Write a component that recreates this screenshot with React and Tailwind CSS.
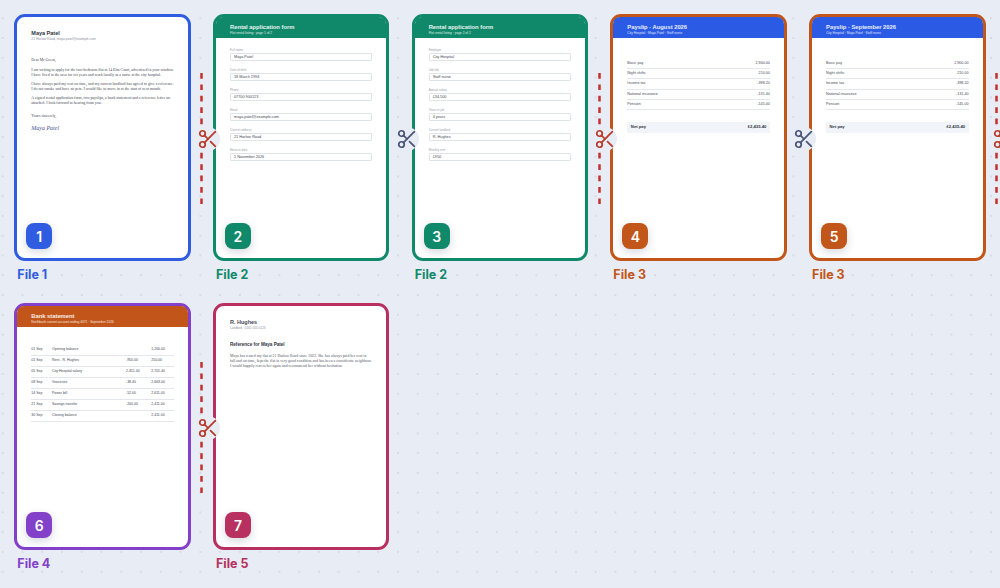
import React from 'react';
import { Scissors } from 'lucide-react';

const sans = "font-['Liberation_Sans',Arial,sans-serif]";
const serif = "font-['Liberation_Serif','Times_New_Roman',serif]";

const form1 = [
  ['Full name', 'Maya Patel'],
  ['Date of birth', '18 March 1994'],
  ['Phone', '07700 900123'],
  ['Email', 'maya.patel@example.com'],
  ['Current address', '21 Harlow Road'],
  ['Move-in date', '1 November 2026'],
];

const form2 = [
  ['Employer', 'City Hospital'],
  ['Job title', 'Staff nurse'],
  ['Annual salary', '£34,500'],
  ['Years in job', '4 years'],
  ['Current landlord', 'R. Hughes'],
  ['Monthly rent', '£950'],
];

const payRows = [
  ['Basic pay', '2,900.00'],
  ['Night shifts', '210.00'],
  ['Income tax', '-398.20'],
  ['National insurance', '-131.40'],
  ['Pension', '-145.00'],
];

const bankRows = [
  ['01 Sep', 'Opening balance', '', '1,200.00'],
  ['01 Sep', 'Rent - R. Hughes', '-950.00', '250.00'],
  ['05 Sep', 'City Hospital salary', '2,451.40', '2,701.40'],
  ['08 Sep', 'Groceries', '-38.40', '2,663.00'],
  ['14 Sep', 'Power bill', '-52.00', '2,611.00'],
  ['21 Sep', 'Savings transfer', '-200.00', '2,411.00'],
  ['30 Sep', 'Closing balance', '', '2,411.00'],
];

function Header({ title, sub, color }) {
  return (
    <div className={`${color} h-[20.5px] rounded-t-[7px] pl-[14px] pt-[5.5px] text-white/90 ${sans}`}>
      <div className="text-[5.8px] leading-[8px] font-bold">{title}</div>
      <div className="text-[3.2px] leading-[4.5px] mt-[0.5px] opacity-90">{sub}</div>
    </div>
  );
}

function Letter() {
  return (
    <div className="pl-[14px] pr-[14px] pt-[13px]">
      <div className={`${sans} text-[5.5px] leading-[7px] font-bold text-[#30353f]`}>Maya Patel</div>
      <div className={`${sans} text-[3.3px] leading-[5px] text-[#8a909d]`}>21 Harlow Road, maya.patel@example.com</div>
      <div className={`${serif} text-[3.9px] leading-[4.7px] text-[#454a55] mt-[16px] space-y-[4.9px]`}>
        <p className="mb-[5.2px]">Dear Mr Green,</p>
        <p>I am writing to apply for the two-bedroom flat at 14 Elm Court, advertised in your window. I have lived in the area for six years and work locally as a nurse at the city hospital.</p>
        <p>I have always paid my rent on time, and my current landlord has agreed to give a reference. I do not smoke and have no pets. I would like to move in at the start of next month.</p>
        <p>A signed rental application form, two payslips, a bank statement and a reference letter are attached. I look forward to hearing from you.</p>
        <p className="pt-[3px]">Yours sincerely,</p>
      </div>
      <div className={`${serif} italic text-[6px] leading-[8px] text-[#4a5590] mt-[5.5px]`}>Maya Patel</div>
    </div>
  );
}

function Form({ sub, rows }) {
  return (
    <div>
      <Header title="Rental application form" sub={sub} color="bg-[#10896a]" />
      <div className={`${sans} px-[14px] pt-[10px] space-y-[7px]`}>
        {rows.map(([label, value]) => (
          <div key={label}>
            <div className="text-[3px] leading-[4px] text-[#9aa0ac] mb-[1px]">{label}</div>
            <div className="h-[8px] w-[142px] border border-[#dfe3ea] rounded-[1px] pl-[3px] text-[3.8px] leading-[6px] text-[#454a55]">{value}</div>
          </div>
        ))}
      </div>
    </div>
  );
}

function Payslip({ month }) {
  return (
    <div>
      <Header title={`Payslip · ${month} 2026`} sub="City Hospital · Maya Patel · Staff nurse" color="bg-[#2b5be4]" />
      <div className={`${sans} px-[14px] pt-[21.5px] text-[3.7px] text-[#454a55]`}>
        {payRows.map(([label, value]) => (
          <div key={label} className="flex justify-between h-[10.2px] leading-[8.5px] border-b border-[#e3e6ec]">
            <span>{label}</span>
            <span>{value}</span>
          </div>
        ))}
        <div className="mt-[12px] h-[11px] bg-[#f1f4f8] px-[3.5px] flex justify-between items-center text-[4.2px] font-bold text-[#30353f]">
          <span>Net pay</span>
          <span>£2,435.40</span>
        </div>
      </div>
    </div>
  );
}

function Statement() {
  return (
    <div>
      <Header
        title="Bank statement"
        sub="Northbank current account ending 4471 · September 2026"
        color="bg-[#c2561a]"
      />
      <div className={`${sans} px-[14px] pt-[18px] text-[3.5px] text-[#454a55]`}>
        {bankRows.map(([date, desc, amount, balance]) => (
          <div key={date + desc} className="grid grid-cols-[20.7px_74px_25.3px_1fr] h-[11px] leading-[9px] border-b border-[#e3e6ec]">
            <span>{date}</span>
            <span>{desc}</span>
            <span>{amount}</span>
            <span>{balance}</span>
          </div>
        ))}
      </div>
    </div>
  );
}

function Reference() {
  return (
    <div className="px-[14px] pt-[12.5px]">
      <div className={`${sans} text-[5.5px] leading-[7px] font-bold text-[#454a55]`}>R. Hughes</div>
      <div className={`${sans} text-[3.1px] leading-[5px] text-[#8a909d]`}>Landlord · 0161 555 0123</div>
      <div className={`${sans} text-[4.6px] leading-[6px] font-bold text-[#30353f] mt-[11.5px]`}>Reference for Maya Patel</div>
      <p className={`${serif} text-[3.9px] leading-[5px] text-[#545965] mt-[6px]`}>
        Maya has rented my flat at 21 Harlow Road since 2022. She has always paid her rent in full and on time, kept the flat in very good condition and has been a considerate neighbour. I would happily rent to her again and recommend her without hesitation.
      </p>
    </div>
  );
}

// cut mark sits in the gap left of a card; `far` puts it in the gap on the right instead
function Cut({ kind, far }) {
  const red = kind === 'red';
  return (
    <div className={`absolute top-0 w-0 h-0 ${far ? 'left-[198.6px]' : 'left-0'}`}>
      {red && (
        <svg className="absolute left-[-12.5px] top-[59px]" width="3" height="132">
          <line x1="1.5" y1="0" x2="1.5" y2="132" stroke="#c4302f" strokeWidth="2.5" strokeDasharray="5.7 5.7" />
        </svg>
      )}
      <div className="absolute left-[-17px] top-[113px] w-[24px] h-[24px] rounded-full bg-[#e8ecf4] flex items-center justify-center">
        <Scissors size={22} strokeWidth={1.9} className={red ? 'text-[#b83a2a]' : 'text-[#4b5578]'} />
      </div>
    </div>
  );
}

const pages = [
  { n: 1, file: 'File 1', border: 'border-[#2f5ce0]', badge: 'bg-[#2f5ce0]', text: 'text-[#2f5ce0]', body: <Letter /> },
  { n: 2, file: 'File 2', border: 'border-[#10896a]', badge: 'bg-[#10896a]', text: 'text-[#10896a]', cut: 'red', body: <Form sub="Flat rental listing · page 1 of 2" rows={form1} /> },
  { n: 3, file: 'File 2', border: 'border-[#10896a]', badge: 'bg-[#10896a]', text: 'text-[#10896a]', cut: 'grey', body: <Form sub="Flat rental listing · page 2 of 2" rows={form2} /> },
  { n: 4, file: 'File 3', border: 'border-[#c2561a]', badge: 'bg-[#c2561a]', text: 'text-[#c2561a]', cut: 'red', body: <Payslip month="August" /> },
  { n: 5, file: 'File 3', border: 'border-[#c2561a]', badge: 'bg-[#c2561a]', text: 'text-[#c2561a]', cut: 'grey', farCut: 'red', body: <Payslip month="September" /> },
  { n: 6, file: 'File 4', border: 'border-[#8340c9]', badge: 'bg-[#8340c9]', text: 'text-[#8340c9]', body: <Statement /> },
  { n: 7, file: 'File 5', border: 'border-[#b8305f]', badge: 'bg-[#b8305f]', text: 'text-[#b8305f]', cut: 'red', body: <Reference /> },
];

export default function App() {
  return (
    <div className="h-[588px] w-full overflow-hidden bg-[#e8ecf4] bg-[radial-gradient(circle,#d0d5e0_0.6px,transparent_1px)] bg-[length:19.77px_19.77px] bg-[position:-7.2px_8.4px] font-['Inter',sans-serif]">
      <div className="flex flex-wrap content-start gap-x-[22.2px] gap-y-[18px] pl-[14.3px] pt-[14px]">
        {pages.map((p) => (
          <div key={p.n} className="relative w-[176.5px]">
            <div className={`relative h-[247px] rounded-[11px] border-[3px] bg-white ${p.border}`}>
              {p.body}
              <div className={`absolute left-[9px] bottom-[9px] w-[26px] h-[26px] rounded-[8px] flex items-center justify-center text-white text-[14px] font-semibold shadow-[0_3px_8px_rgba(30,40,80,0.18)] ${p.badge}`}>
                {p.n}
              </div>
            </div>
            <div className={`mt-[3px] pl-[3px] h-[21px] text-[12.5px] leading-[21px] font-bold ${p.text}`}>{p.file}</div>
            {p.cut && <Cut kind={p.cut} />}
            {p.farCut && <Cut kind={p.farCut} far />}
          </div>
        ))}
      </div>
    </div>
  );
}
